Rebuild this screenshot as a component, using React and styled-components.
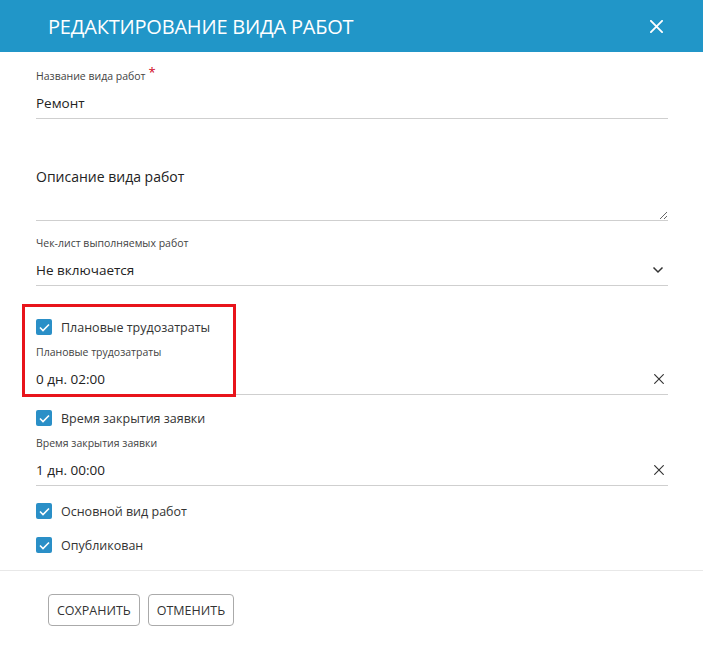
import React, { useState } from 'react'
import styled, { createGlobalStyle } from 'styled-components'

const GlobalStyle = createGlobalStyle`
  body {
    margin: 0;
    background: #fff;
    font-family: "Open Sans", "Liberation Sans", sans-serif;
    color: #222;
  }
`

const CloseIcon = ({ size = 13, color = '#fff', width = 2 }) => (
  <svg width={size} height={size} viewBox="0 0 14 14">
    <path d="M1 1 L13 13 M13 1 L1 13" stroke={color} strokeWidth={width} strokeLinecap="square" />
  </svg>
)

const ChevronIcon = () => (
  <svg width="12" height="8" viewBox="0 0 12 8">
    <path d="M1.5 1.5 L6 6 L10.5 1.5" stroke="#333" strokeWidth="1.5" fill="none" />
  </svg>
)

const CheckIcon = () => (
  <svg width="11" height="9" viewBox="0 0 11 9">
    <path d="M1 4.5 L4 7.5 L10 1.5" stroke="#fff" strokeWidth="1.6" fill="none" />
  </svg>
)

const CheckRow = ({ label, margin }) => {
  const [checked, setChecked] = useState(true)
  return (
    <CheckLine margin={margin} onClick={() => setChecked(!checked)}>
      <Box checked={checked}>{checked && <CheckIcon />}</Box>
      <CheckLabel>{label}</CheckLabel>
    </CheckLine>
  )
}

export default function App() {
  return (
    <Modal>
      <GlobalStyle />
      <Header>
        <Title>РЕДАКТИРОВАНИЕ ВИДА РАБОТ</Title>
        <HeaderClose><CloseIcon /></HeaderClose>
      </Header>
      <Body>
        <Label>Название вида работ<Star>*</Star></Label>
        <InputRow>
          <Value>Ремонт</Value>
        </InputRow>

        <TextArea placeholder="Описание вида работ" />

        <Label margin="15px">Чек-лист выполняемых работ</Label>
        <InputRow>
          <Value>Не включается</Value>
          <RowIcon><ChevronIcon /></RowIcon>
        </InputRow>

        <Highlighted>
          <CheckRow label="Плановые трудозатраты" margin="29px" />
          <Label margin="6px">Плановые трудозатраты</Label>
          <InputRow>
            <Value>0 дн. 02:00</Value>
            <RowIcon><CloseIcon size={10} color="#333" width={1.6} /></RowIcon>
          </InputRow>
          <RedFrame />
        </Highlighted>

        <CheckRow label="Время закрытия заявки" margin="11px" />
        <Label margin="6px">Время закрытия заявки</Label>
        <InputRow>
          <Value>1 дн. 00:00</Value>
          <RowIcon><CloseIcon size={10} color="#333" width={1.6} /></RowIcon>
        </InputRow>

        <CheckRow label="Основной вид работ" margin="13px" />
        <CheckRow label="Опубликован" margin="10px" />
      </Body>
      <Footer>
        <Button>Сохранить</Button>
        <Button>Отменить</Button>
      </Footer>
    </Modal>
  )
}

const Modal = styled.div`
  width: 703px;
  min-height: 650px;
  background: #fff;
`
const Header = styled.header`
  height: 52px;
  background: #2196c8;
  display: flex;
  align-items: center;
  justify-content: space-between;
  padding: 0 40px 0 48px;
`
const Title = styled.h1`
  margin: 0;
  color: #fff;
  font-size: 20px;
  font-weight: 400;
  letter-spacing: -0.2px;
`
const HeaderClose = styled.div`
  display: flex;
  width: 13px;
  height: 13px;
  cursor: pointer;
`
const Body = styled.div`
  display: flex;
  flex-direction: column;
  padding: 17px 35px 13px 36px;
  border-bottom: 1px solid #e8e8e8;
`
const Label = styled.div`
  font-size: 10.5px;
  line-height: 14px;
  color: #444;
  margin-top: ${p => p.margin || '0'};
`
const Star = styled.span`
  color: #d0021b;
  font-size: 13px;
  margin-left: 3px;
  vertical-align: top;
  position: relative;
  top: -4px;
`
const InputRow = styled.div`
  display: flex;
  align-items: center;
  justify-content: space-between;
  padding: 8px 0 3px;
  border-bottom: 1px solid #cfcfcf;
`
const Value = styled.div`
  font-size: 13.5px;
  line-height: 24px;
  color: #222;
`
const RowIcon = styled.div`
  display: flex;
  margin-right: 4px;
`
const TextArea = styled.textarea`
  margin-top: 42px;
  height: 60px;
  box-sizing: border-box;
  padding: 5px 0 0;
  border: none;
  border-bottom: 1px solid #cfcfcf;
  font-family: inherit;
  font-size: 14px;
  line-height: 22px;
  outline: none;
  resize: vertical;

  &::placeholder {
    color: #222;
  }
`
const Highlighted = styled.div`
  position: relative;
  display: flex;
  flex-direction: column;
`
const RedFrame = styled.div`
  position: absolute;
  left: -14px;
  top: 18px;
  width: 208px;
  bottom: -2px;
  border: 3px solid #e8141b;
  pointer-events: none;
`
const CheckLine = styled.div`
  display: flex;
  align-items: center;
  height: 24px;
  gap: 9px;
  margin-top: ${p => p.margin || '0'};
  cursor: pointer;
`
const Box = styled.div`
  width: 16px;
  height: 16px;
  border-radius: 2px;
  box-sizing: border-box;
  display: flex;
  align-items: center;
  justify-content: center;
  background: ${p => (p.checked ? '#2a8fc7' : '#fff')};
  border: ${p => (p.checked ? 'none' : '1px solid #999')};
`
const CheckLabel = styled.span`
  font-size: 12.5px;
  color: #333;
`
const Footer = styled.footer`
  display: flex;
  gap: 8px;
  padding: 23px 48px;
`
const Button = styled.button`
  height: 32px;
  padding: 0 8px;
  border: 1px solid #aaa;
  border-radius: 4px;
  background: #fff;
  font-family: inherit;
  font-size: 12.5px;
  color: #333;
  text-transform: uppercase;
  cursor: pointer;
`
